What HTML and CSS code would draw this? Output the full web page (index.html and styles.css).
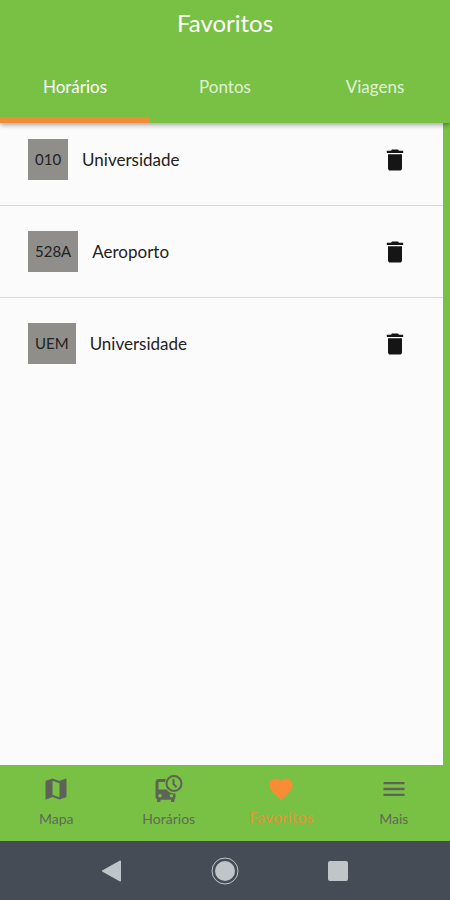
FILE: index.html
```html
<!DOCTYPE html>
<html lang="pt">
<head>
    <meta charset="UTF-8">
    <meta name="viewport" content="width=device-width, initial-scale=1.0">
    <title>Favoritos</title>
    <link rel="stylesheet" href="styles.css">
</head>
<body>

<svg class="symbols" aria-hidden="true">
    <symbol id="trash" viewBox="0 0 24 24">
        <path d="M6 19c0 1.100.9 2 2 2h8c1.100 0 2-.9 2-2V7H6v12zM19 4h-3.500l-1-1h-5l-1 1H5v2h14V4z"/>
    </symbol>
</svg>

<header class="header">
    <h1>Favoritos</h1>
    <div class="tabs" role="tablist">
        <button class="tab active" role="tab" aria-selected="true">Horários</button>
        <button class="tab" role="tab" aria-selected="false">Pontos</button>
        <button class="tab" role="tab" aria-selected="false">Viagens</button>
    </div>
</header>

<main class="content">
    <ul class="favorites">
        <li>
            <span class="line">010</span>
            <span class="name">Universidade</span>
            <button class="delete" aria-label="Excluir"><svg><use href="#trash"/></svg></button>
        </li>
        <li>
            <span class="line">528A</span>
            <span class="name">Aeroporto</span>
            <button class="delete" aria-label="Excluir"><svg><use href="#trash"/></svg></button>
        </li>
        <li>
            <span class="line">UEM</span>
            <span class="name">Universidade</span>
            <button class="delete" aria-label="Excluir"><svg><use href="#trash"/></svg></button>
        </li>
    </ul>
</main>

<nav class="bottom-nav">
    <a href="#mapa">
        <svg viewBox="0 0 24 24"><path d="M20.500 3l-.16.03L15 5.100 9 3 3.360 4.900c-.21.07-.36.25-.36.480V20.500c0 .28.22.5.5.5l.16-.03L9 18.900l6 2.100 5.640-1.900c.21-.07.36-.25.36-.48V3.500c0-.28-.22-.5-.5-.5zM15 19l-6-2.110V5l6 2.110V19z"/></svg>
        <span>Mapa</span>
    </a>
    <a href="#horarios">
        <svg viewBox="0 0 30 28">
            <path fill-rule="evenodd" d="M5 4h7a10 10 0 0 0-1 3H5.500a1 1 0 0 0-1 1v6.500h8a10 10 0 0 0 9 4V22c0 1-.4 1.800-1 2.300V26c0 .6-.4 1-1 1H18c-.6 0-1-.4-1-1v-1.300H6.500V26c0 .6-.4 1-1 1H4c-.6 0-1-.4-1-1v-1.700c-.9-.5-1.500-1.300-1.500-2.300V8c0-2.500 1-4 3.500-4zM6 19a1.800 1.800 0 1 0 0 3.600A1.800 1.800 0 0 0 6 19zm11.500 0a1.800 1.800 0 1 0 0 3.600 1.800 1.800 0 0 0 0-3.600z"/>
            <circle class="stroke" cx="20" cy="8.500" r="7.500"/>
            <path class="stroke" d="M19.500 4v5l3 3"/>
        </svg>
        <span>Horários</span>
    </a>
    <a href="#favoritos" class="active">
        <svg viewBox="0 0 24 24"><path d="M12 21.350l-1.450-1.320C5.400 15.360 2 12.280 2 8.500 2 5.420 4.420 3 7.500 3c1.740 0 3.410.81 4.500 2.090C13.090 3.810 14.760 3 16.500 3 19.580 3 22 5.420 22 8.500c0 3.780-3.400 6.860-8.550 11.540L12 21.350z"/></svg>
        <span>Favoritos</span>
    </a>
    <a href="#mais">
        <svg viewBox="0 0 24 24"><path d="M3 18h18v-2H3v2zm0-5h18v-2H3v2zm0-7v2h18V6H3z"/></svg>
        <span>Mais</span>
    </a>
</nav>

<div class="system-nav">
    <button aria-label="Voltar"><svg viewBox="0 0 30 30"><path d="M24 5.500v19a1 1 0 0 1-1.500.8L6 16a1 1 0 0 1 0-2L22.500 4.700a1 1 0 0 1 1.500.8z"/></svg></button>
    <button aria-label="Início"><svg viewBox="0 0 30 30"><circle cx="15" cy="15" r="10"/><circle class="ring" cx="15" cy="15" r="13"/></svg></button>
    <button aria-label="Recentes"><svg viewBox="0 0 30 30"><rect x="5" y="5" width="20" height="20" rx="2"/></svg></button>
</div>

</body>
</html>
```
FILE: styles.css
```css
* {
    box-sizing: border-box;
}
body {
    font-family: Lato, 'Open Sans', sans-serif;
    background-color: #78c144;
    color: #222;
    margin: 0;
    display: flex;
    flex-direction: column;
    min-height: 100vh;
}
button {
    font: inherit;
    border: none;
    background: none;
    padding: 0;
    cursor: pointer;
}
.symbols {
    display: none;
}
.header {
    background-color: #78c144;
    color: white;
    position: relative;
    box-shadow: 0 2px 5px rgba(0, 0, 0, 0.35);
}
.header h1 {
    margin: 0;
    padding-top: 8px;
    font-size: 24px;
    line-height: 30px;
    font-weight: 400;
    text-align: center;
}
.tabs {
    display: flex;
    margin-top: 12px;
}
.tab {
    flex: 1;
    height: 73px;
    border-top: 6px solid transparent;
    border-bottom: 6px solid transparent;
    color: rgba(255, 255, 255, 0.8);
    font-size: 17px;
}
.tab.active {
    color: white;
    border-bottom-color: #f08c38;
}
.content {
    flex: 1;
    margin-right: 7px;
    background-color: #fbfbfb;
}
.favorites {
    list-style-type: none;
    margin: 0;
    padding: 0;
}
.favorites li {
    display: flex;
    align-items: center;
    padding: 25px 34px 25px 28px;
    border-bottom: 1px solid #d9d9d9;
}
.favorites li:first-child {
    padding-top: 16px;
}
.favorites li:last-child {
    border-bottom: none;
}
.line {
    padding: 0 7px;
    background-color: #8f8e8b;
    font-size: 15px;
    line-height: 41px;
}
.name {
    flex: 1;
    margin-left: 14px;
    font-size: 17px;
    line-height: 20px;
}
.delete svg {
    display: block;
    width: 28px;
    height: 28px;
    fill: #151515;
}
.bottom-nav {
    display: flex;
    height: 76px;
}
.bottom-nav a {
    flex: 1;
    display: flex;
    flex-direction: column;
    align-items: center;
    padding-top: 10px;
    color: #61695a;
    font-size: 14px;
    line-height: 20px;
    text-decoration: none;
}
.bottom-nav svg {
    width: 30px;
    height: 28px;
    margin-bottom: 6px;
    fill: #5d6358;
}
.bottom-nav .stroke {
    fill: none;
    stroke: #5d6358;
    stroke-width: 2;
}
.bottom-nav .active {
    color: #e59238;
    font-size: 16px;
    line-height: 16px;
}
.bottom-nav .active svg {
    fill: #fa8c35;
}
.system-nav {
    display: flex;
    justify-content: center;
    align-items: center;
    gap: 83px;
    height: 59px;
    background-color: #454c56;
}
.system-nav svg {
    display: block;
    width: 30px;
    height: 30px;
    fill: #bfc5c8;
}
.system-nav .ring {
    fill: none;
    stroke: #bfc5c8;
    stroke-width: 1;
}
```
